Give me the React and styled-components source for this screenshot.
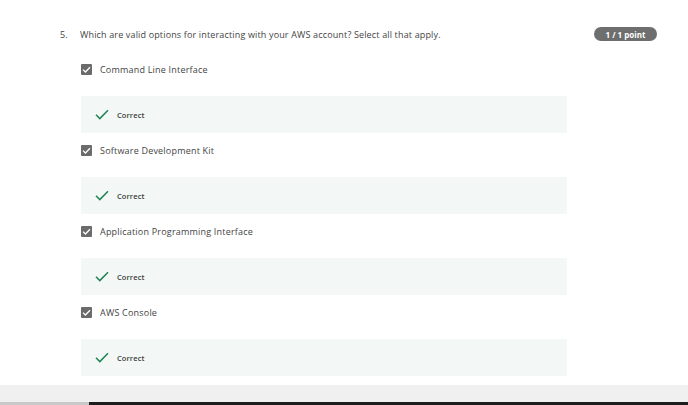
import React from "react";
import styled, { createGlobalStyle } from "styled-components";

const Global = createGlobalStyle`
  html, body {
    margin: 0;
    padding: 0;
    background: #ffffff;
  }
  body {
    font-family: "Open Sans", "Liberation Sans", sans-serif;
    color: #333333;
  }
`;

const Page = styled.div`
  width: 688px;
  height: 405px;
  overflow: hidden;
  display: flex;
  flex-direction: column;
`;

const Question = styled.section`
  flex: 1;
  padding-top: 24px;
`;

const QuestionHead = styled.div`
  display: flex;
  align-items: center;
  height: 20px;
  padding: 0 31px 0 60px;
`;

const Number = styled.span`
  width: 20px;
  font-size: 9px;
  color: #444444;
`;

const Prompt = styled.div`
  flex: 1;
  font-size: 9px;
  letter-spacing: 0.15px;
  color: #444444;
`;

const Badge = styled.span`
  background: #6e6e6e;
  color: #ffffff;
  font-size: 8px;
  font-weight: 700;
  border-radius: 8px;
  width: 63px;
  height: 14px;
  display: flex;
  align-items: center;
  justify-content: center;
`;

const Options = styled.div`
  margin: 8px 0 0 81px;
  width: 486px;
  display: flex;
  flex-direction: column;
`;

const OptionRow = styled.label`
  display: flex;
  align-items: center;
  gap: 8px;
  height: 34px;
  margin-bottom: 10px;
  font-size: 9px;
  letter-spacing: 0.2px;
  color: #444444;
`;

const Box = styled.span`
  width: 11px;
  height: 11px;
  border-radius: 1px;
  background: #6b6b6b;
  display: flex;
  align-items: center;
  justify-content: center;
`;

const Feedback = styled.div`
  height: 37px;
  background: #f3f8f6;
  display: flex;
  align-items: center;
  gap: 8px;
  padding-left: 14px;
  font-size: 7.5px;
  font-weight: 600;
  letter-spacing: 0.1px;
  color: #3d3d3d;
`;

const Footer = styled.div`
  height: 17px;
  background: #f0f0f0;
  margin-top: 8px;
`;

const BottomStrip = styled.div`
  height: 3px;
  display: flex;
`;

const StripPart = styled.div`
  width: ${(p) => p.$w || "auto"};
  flex: ${(p) => (p.$w ? "none" : 1)};
  background: ${(p) => p.$bg};
`;

const Tick = () => (
  <svg width="9" height="7" viewBox="0 0 9 7">
    <path d="M1 3.6 L3.4 6 L8 1.2" fill="none" stroke="#fff" strokeWidth="1.3" />
  </svg>
);

const GreenCheck = () => (
  <svg width="14" height="11" viewBox="0 0 14 11">
    <path d="M1 5.8 L4.8 9.6 L13 1.2" fill="none" stroke="#1f8354" strokeWidth="1.5" />
  </svg>
);

const options = [
  "Command Line Interface",
  "Software Development Kit",
  "Application Programming Interface",
  "AWS Console",
];

export default function App() {
  return (
    <>
      <Global />
      <Page>
        <Question>
          <QuestionHead>
            <Number>5.</Number>
            <Prompt>
              Which are valid options for interacting with your AWS account? Select all that apply.
            </Prompt>
            <Badge>1 / 1 point</Badge>
          </QuestionHead>
          <Options>
            {options.map((o) => (
              <React.Fragment key={o}>
                <OptionRow>
                  <Box>
                    <Tick />
                  </Box>
                  {o}
                </OptionRow>
                <Feedback>
                  <GreenCheck />
                  Correct
                </Feedback>
              </React.Fragment>
            ))}
          </Options>
        </Question>
        <Footer />
        <BottomStrip>
          <StripPart $w="89px" $bg="#c9c9c9" />
          <StripPart $bg="#1e1e1e" />
        </BottomStrip>
      </Page>
    </>
  );
}
